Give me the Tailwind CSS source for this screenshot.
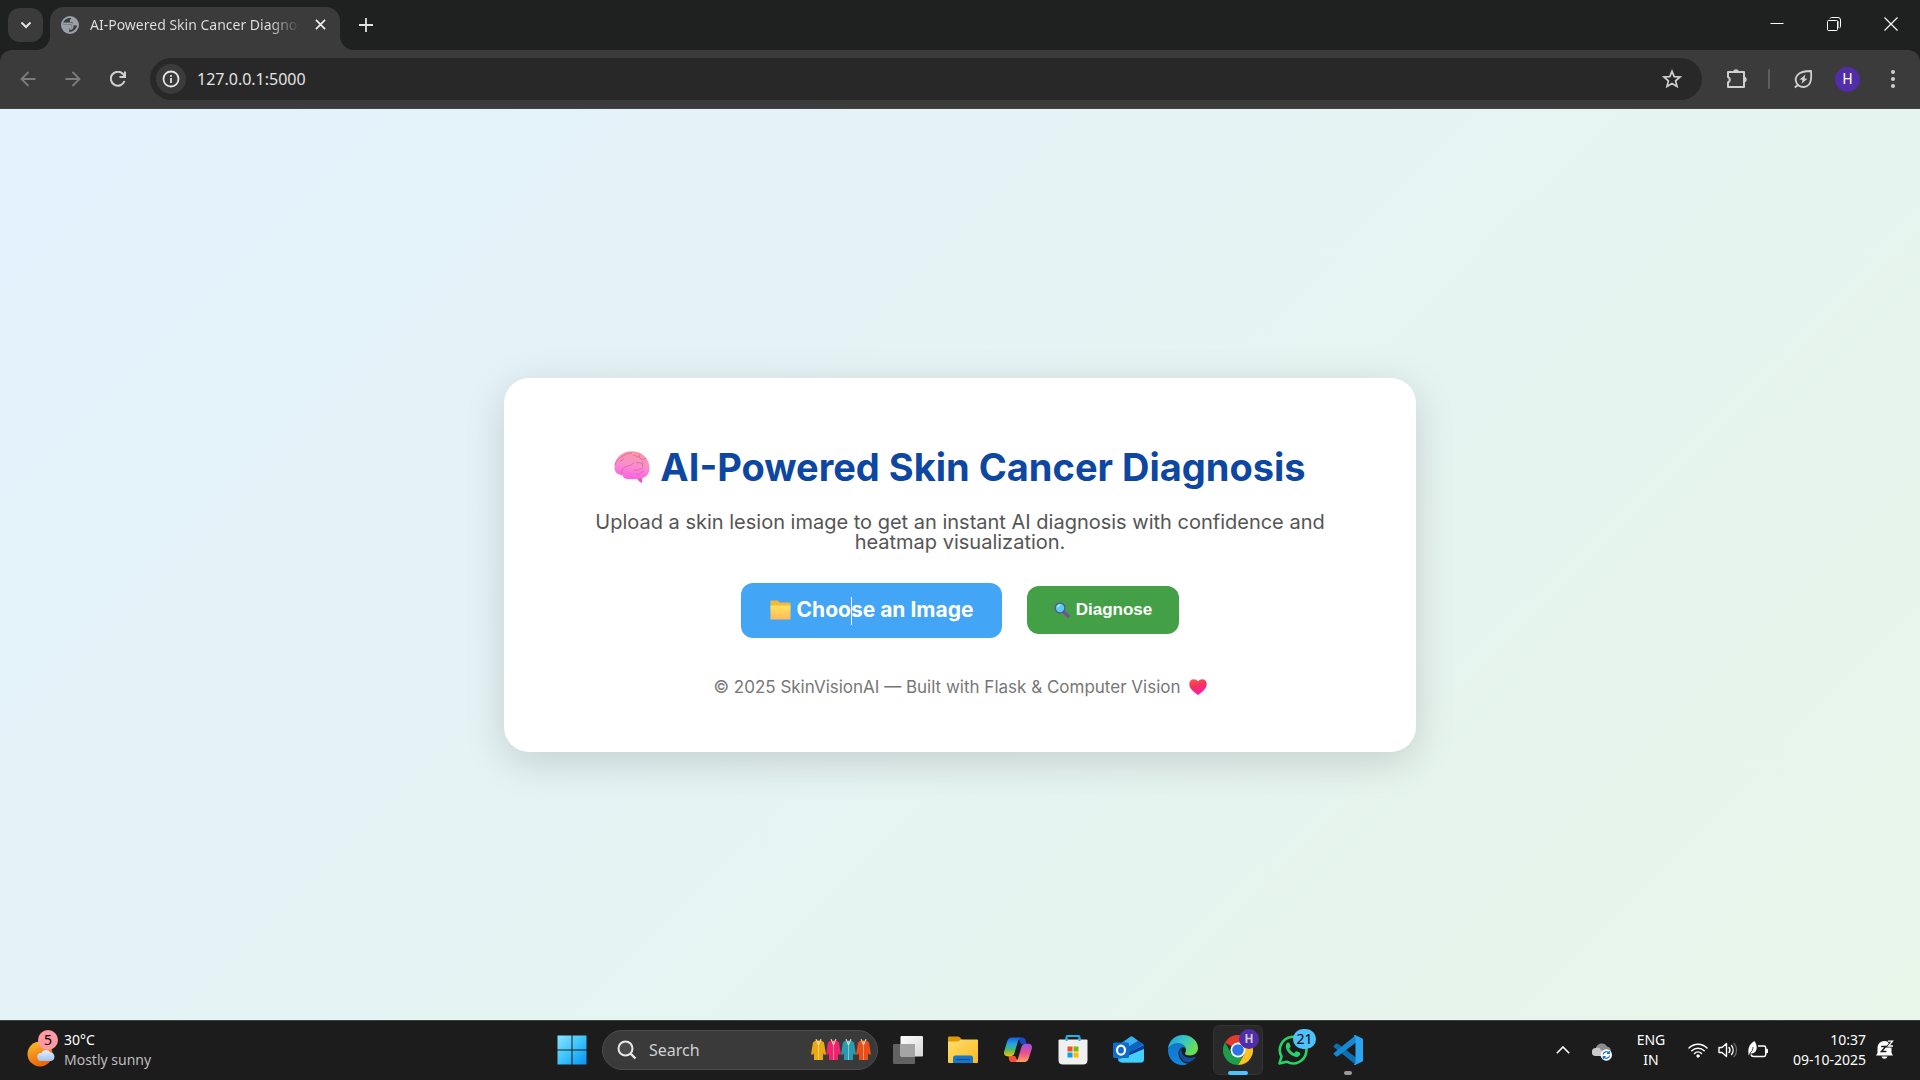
<!DOCTYPE html>
<html lang="en">
<head>
<meta charset="utf-8">
<meta name="viewport" content="width=device-width, initial-scale=1">
<title>AI-Powered Skin Cancer Diagnosis</title>
<script src="https://cdn.jsdelivr.net/npm/@tailwindcss/browser@4"></script>
</head>
<body class="flex h-screen flex-col overflow-hidden bg-[#1f2120] font-['Noto_Sans',sans-serif] text-[#e3e3e3]">

<!-- Browser window chrome -->
<header class="shrink-0">
  <div class="flex h-[50px] justify-between">
    <div class="flex items-start">
      <button aria-label="Search tabs" class="mt-2 ml-2 flex h-[34px] w-[35px] items-center justify-center rounded-xl bg-[#3b3b3b]">
        <svg class="size-4" viewBox="0 0 16 16" fill="none" stroke="#e3e3e3" stroke-width="2"><path d="M3.500 5.500 8 10l4.500-4.500"/></svg>
      </button>
      <div class="relative mt-[7px] ml-[7px] flex h-[43px] w-[290px] items-center rounded-t-[14px] bg-[#3b3b3b] pr-2.5 pl-2.5">
        <svg class="absolute bottom-0 -left-3.5 size-3.5" viewBox="0 0 14 14" fill="#3b3b3b"><path d="M14 0v14H0A14 14 0 0 0 14 0z"/></svg>
        <svg class="absolute -right-3.5 bottom-0 size-3.5" viewBox="0 0 14 14" fill="#3b3b3b"><path d="M0 0v14h14A14 14 0 0 1 0 0z"/></svg>
        <svg class="-mt-2 size-5 shrink-0" viewBox="0 0 20 20"><circle cx="10" cy="10" r="9" fill="#9aa0a8"/><path d="M9.500 3C6 3.300 3.200 6 3 9.200h6.500c1.400 0 2.300.8 2.300 2.200s-1 2.200-2.600 2.200v3.300c4-.1 7.300-2.700 7.800-6.400h-2.500c-1.300 0-2-.8-2-2V7.300H9.800V5.500c0-.8.3-1.200 1.200-1.200V3z" fill="#3b3b3b"/><path d="M3.200 8.300h6.500c2 0 3 1.200 3 3s-1.200 3-3 3" fill="none" stroke="#9aa0a8" stroke-width="1.600"/></svg>
        <span class="-mt-2 ml-2.5 w-[210px] overflow-hidden bg-linear-to-r from-[#e3e3e3] from-85% to-transparent bg-clip-text text-sm whitespace-nowrap text-transparent">AI-Powered Skin Cancer Diagnosis</span>
        <button aria-label="Close tab" class="-mt-2 ml-2.5 flex size-5 shrink-0 items-center justify-center">
          <svg class="size-[11px]" viewBox="0 0 12 12" stroke="#f0f0f0" stroke-width="1.800"><path d="M1 1l10 10M11 1 1 11"/></svg>
        </button>
      </div>
      <button aria-label="New tab" class="mt-[15px] ml-4 flex size-5 items-center justify-center">
        <svg class="size-3.5" viewBox="0 0 14 14" stroke="#e3e3e3" stroke-width="1.800"><path d="M7 0v14M0 7h14"/></svg>
      </button>
    </div>
    <div class="flex pr-px">
      <button aria-label="Minimize" class="flex h-12 w-[57px] items-center justify-center"><svg class="size-[14px]" viewBox="0 0 14 14" stroke="#fff"><path d="M.5 6.500h13"/></svg></button>
      <button aria-label="Restore" class="flex h-12 w-[57px] items-center justify-center"><svg class="size-[14px]" viewBox="0 0 14 14" fill="none" stroke="#fff"><rect x=".5" y="3.500" width="10" height="10" rx="1"/><path d="M3 1.500c.3-.6.800-1 1.500-1H11A2.500 2.500 0 0 1 13.500 3v6.500c0 .8-.4 1.300-1 1.500"/><path d="M11.500 4v7" stroke="#999"/></svg></button>
      <button aria-label="Close" class="flex h-12 w-[57px] items-center justify-center"><svg class="size-[14px]" viewBox="0 0 14 14" stroke="#fff" stroke-width="1.200"><path d="M.5.5l13 13M13.500.5l-13 13"/></svg></button>
    </div>
  </div>

  <div class="flex h-[59px] items-center rounded-t-xl border-b border-[#4a4647] bg-[#3b3b3b] px-[5px]">
    <button aria-label="Back" class="flex w-[45px] justify-center"><svg class="size-4" viewBox="0 0 16 16" fill="none" stroke="#7c7c7c" stroke-width="1.800"><path d="M15.500 8H2M8.500 1 1.500 8l7 7"/></svg></button>
    <button aria-label="Forward" class="flex w-[45px] justify-center"><svg class="size-4" viewBox="0 0 16 16" fill="none" stroke="#7c7c7c" stroke-width="1.800"><path d="M.5 8H14M7.500 1l7 7-7 7"/></svg></button>
    <button aria-label="Reload" class="flex w-[45px] justify-center"><svg class="size-4" viewBox="0 0 16 16" fill="none" stroke="#d0d0d0" stroke-width="2"><path d="M14.500 10A7 7 0 1 1 13 3l1.500 1.800"/><path d="M15 .5V6H9.500"/></svg></button>
    <div class="ml-2.5 flex h-[42px] min-w-0 flex-1 items-center rounded-full bg-[#282828] pr-5 pl-1.5">
      <button aria-label="View site information" class="flex size-[30px] shrink-0 items-center justify-center rounded-full bg-[#3b3b3b]"><svg class="size-[18px]" viewBox="0 0 18 18" fill="none" stroke="#e3e3e3" stroke-width="1.800"><circle cx="9" cy="9" r="7.500"/><path d="M9 8v5M9 5v1.800"/></svg></button>
      <input aria-label="Address" type="text" value="127.0.0.1:5000" class="ml-[11px] min-w-0 flex-1 bg-transparent text-base text-[#e3e3e3] outline-none">
      <button aria-label="Bookmark this tab"><svg class="size-5" viewBox="0 0 20 20" fill="none" stroke="#cfcfcf" stroke-width="1.700"><path d="M10 2.300l2.200 5.300 5.800.4-4.400 3.800 1.400 5.600-5-3-5 3 1.400-5.600L2 8l5.800-.4z"/></svg></button>
    </div>
    <button aria-label="Extensions" class="ml-3 flex w-[45px] justify-center"><svg class="size-[22px]" viewBox="0 0 22 22" fill="none" stroke="#cfcfcf" stroke-width="2" stroke-linejoin="round"><path d="M2 4h16v15H2v-4.500a3 3 0 0 0 0-5.500z"/><path d="M8 3.500a2.200 2.200 0 0 1 4 0zM18.500 9.500a2.200 2.200 0 0 1 0 4z" fill="#cfcfcf"/></svg></button>
    <span class="ml-[9px] h-5 w-0.5 rounded bg-[#5f5f5f]"></span>
    <button aria-label="Energy Saver" class="ml-2.5 flex w-[45px] justify-center"><svg class="size-5" viewBox="0 0 20 20" fill="none" stroke="#cfcfcf" stroke-width="1.800"><path d="M18 2c.6 6 .3 10.500-2 13.500-2.500 3-7.500 3.300-10.300 1C2.500 14 1.500 9.500 4.500 6 7.500 2.500 12.500 2 18 2zM5.500 15.500 1.800 18.500"/><path d="M12.500 5.500 6.500 10.500l3 .3-1 4 6-5-3-.3z" fill="#cfcfcf" stroke="none"/></svg></button>
    <button aria-label="Profile" class="flex w-[45px] justify-center"><span class="flex size-[25px] items-center justify-center rounded-full bg-[#512da8] font-['Roboto',sans-serif] text-sm text-white">H</span></button>
    <button aria-label="Menu" class="flex w-[45px] justify-center"><svg class="h-[18px] w-1" viewBox="0 0 4 18" fill="#cfcfcf"><circle cx="2" cy="2" r="2"/><circle cx="2" cy="9" r="2"/><circle cx="2" cy="16" r="2"/></svg></button>
  </div>
</header>

<!-- Page -->
<main class="flex min-h-0 flex-1 items-center justify-center bg-linear-[135deg,#e3f2fd,#e8f5e9] font-['Inter',sans-serif]">
  <section class="w-full max-w-[912px] rounded-[25px] bg-white px-20 pt-[65px] pb-[52px] text-center shadow-[0_10px_40px_rgba(0,0,0,0.15)]">
    <h1 class="flex items-center justify-center gap-2.5 text-[38px] leading-[48px] font-bold text-[#0d47a1]">
      <svg class="h-8 w-9 shrink-0" viewBox="0 0 36 32" role="img" aria-label="brain"><defs><linearGradient id="brain" x1=".7" y1="0" x2=".5" y2="1"><stop offset="0" stop-color="#fa9aa0"/><stop offset=".5" stop-color="#f98fcb"/><stop offset="1" stop-color="#ff62e6"/></linearGradient></defs><path d="M23 25l5 1v6c-3-1-4.500-3-5-7z" fill="#ef4cc0"/><path d="M.5 17C0 8 7 .3 18 .3 28.500.3 35.500 8 35.500 17c0 7-5 11-12 11H14c-3 0-5-1.500-5.500-4C4 24 .8 21.500.5 17z" fill="url(#brain)"/><path d="M1 14c2-6 5-7 8-9 3-2 5-3 9-3M6 10c1 0 3-1 4-3M8 23c-1-4 1-7 6-8 3-.5 5-2 6-4M19 4c2 0 4 2 6 2m1-3c-1 2-1 4 1 5s4 0 5-1M22 12c3-1 5 0 7 2m0-4c-1 2-1 4 0 6m-9 3c4 1 6-1 9-2m-7 6c3 1 5-2 8-3" fill="none" stroke="#d65c9c" stroke-width=".7"/></svg>
      <span>AI-Powered Skin Cancer Diagnosis</span>
    </h1>
    <p class="mt-[21px] text-[20px] leading-[20px] text-[#555]">Upload a skin lesion image to get an instant AI diagnosis with confidence and heatmap visualization.</p>
    <form class="mt-[31px] flex items-center justify-center gap-[25px]" onsubmit="return false">
      <label class="relative flex h-[55px] w-[261px] cursor-pointer items-center justify-center gap-1.5 rounded-xl bg-[#42a5f5] text-[21px] font-bold whitespace-nowrap text-white">
        <svg class="h-5 w-[21px] shrink-0" viewBox="0 0 21 20"><defs><linearGradient id="folder" x2="0" y2="1"><stop offset="0" stop-color="#ffe35a"/><stop offset="1" stop-color="#ffb85c"/></linearGradient></defs><path d="M.5 1.500Q.5.5 1.500.5h6l2 2h10.200q.8 0 .8 1V9H.5z" fill="#f5b73c"/><path d="M.5 5.500h20v13q0 1-1 1h-18q-1 0-1-1z" fill="url(#folder)"/></svg>
        <span>Choose an Image</span>
        <span class="absolute top-3.5 left-[110px] h-7 w-px bg-white"></span>
        <input type="file" accept="image/*" class="sr-only">
      </label>
      <button type="submit" class="flex h-12 w-[152px] items-center justify-center gap-1.5 rounded-xl bg-[#43a047] font-['Liberation_Sans',sans-serif] text-[17px] font-bold text-white">
        <svg class="size-4 shrink-0" viewBox="0 0 18 18"><path d="M10.500 10.500l5.500 5.500" stroke="#7c4b9c" stroke-width="3.500" stroke-linecap="round"/><circle cx="6.800" cy="6.800" r="5.500" fill="#5ccdf2" stroke="#54568f" stroke-width="1.500"/><path d="M4 6a3 3 0 0 1 3-2.500" stroke="#b9f0ff" stroke-width="1.200" fill="none"/></svg>
        Diagnose
      </button>
    </form>
    <p class="mt-9 flex items-center justify-center gap-2 text-[17px] leading-[26px] text-[#777]">
      <span>© 2025 SkinVisionAI — Built with Flask &amp; Computer Vision</span>
      <svg class="h-4 w-[18px]" viewBox="0 0 18 16" role="img" aria-label="love"><defs><linearGradient id="heart" x2=".3" y2="1"><stop offset="0" stop-color="#ff5a4d"/><stop offset=".5" stop-color="#f5315f"/><stop offset="1" stop-color="#ff1fa5"/></linearGradient></defs><path d="M9 16C3 12 .3 8.500.3 5 .3 2 2.300.2 4.800.2 6.500.2 8 1 9 2.500 10 1 11.500.2 13.200.2c2.500 0 4.500 1.800 4.500 4.800 0 3.500-2.700 7-8.700 11z" fill="url(#heart)"/></svg>
    </p>
  </section>
</main>

<!-- Taskbar -->
<footer class="grid h-[60px] shrink-0 grid-cols-[1fr_auto_1fr] items-center border-t border-[#3c3f3e] bg-[#1c1c1c] pb-0.5 text-sm leading-5">
  <button class="flex items-center gap-2 pl-[27px] text-left">
    <span class="relative block h-9 w-[29px]">
      <svg class="h-9 w-[29px] overflow-visible" viewBox="0 0 29 36"><defs><linearGradient id="sun" x2=".4" y2="1"><stop offset="0" stop-color="#f6c22e"/><stop offset="1" stop-color="#f0640c"/></linearGradient><linearGradient id="cloud" x2="0" y2="1"><stop offset="0" stop-color="#e8f2ff"/><stop offset="1" stop-color="#9fc2f0"/></linearGradient></defs><circle cx="13" cy="22" r="12.500" fill="url(#sun)"/><path d="M14 29a4 4 0 0 1 .5-8 5 5 0 0 1 9-.5 4.300 4.300 0 0 1 .5 8.500z" fill="url(#cloud)"/></svg>
      <span class="absolute -top-0.5 -right-0.5 flex size-5 items-center justify-center rounded-full bg-[#ff99a4] text-sm text-black">5</span>
    </span>
    <span class="block"><span class="block text-white">30°C</span><span class="block text-[#bdbdbd]">Mostly sunny</span></span>
  </button>

  <nav class="flex items-center gap-[5px]">
    <button aria-label="Start" class="flex size-[50px] items-center justify-center"><svg class="size-[30px]" viewBox="0 0 30 30"><defs><linearGradient id="win" x2="1" y2="1"><stop offset="0" stop-color="#8be3ff"/><stop offset=".5" stop-color="#3cc3fb"/><stop offset="1" stop-color="#0a90f5"/></linearGradient></defs><path d="M.5.5h14v14H.5zM15.500.5h14v14h-14zM.5 15.500h14v14H.5zM15.500 15.500h14v14h-14z" fill="url(#win)"/></svg></button>
    <div class="flex h-10 w-[276px] items-center rounded-full border border-[#4c4c4c] bg-[#3a3a3a] pr-1.5 pl-3.5">
      <svg class="size-5 shrink-0" viewBox="0 0 20 20" fill="none" stroke="#e8e8e8" stroke-width="2"><circle cx="8.500" cy="8.500" r="7" fill="#4a4a4a"/><path d="M13.500 13.500l5 5" stroke-width="2.400"/></svg>
      <input aria-label="Search" type="text" placeholder="Search" class="ml-3 w-0 min-w-0 flex-1 bg-transparent text-base text-[#d0d0d0] outline-none placeholder:text-[#d0d0d0]">
      <svg class="h-[22px] w-[60px] shrink-0" viewBox="0 0 60 22"><defs><g id="kurta"><path d="M4.500 1.500h6l2.500 2 2 12h-2.500l-.5-2v7.500H3v-7.500l-.5 2H0l2-12z"/><path d="M7.500 2v19" stroke="#fff8" stroke-width=".8"/><path d="M5 0l2.500 6L10 0" fill="none" stroke="#ffe0b0" stroke-width="1"/></g></defs><use href="#kurta" fill="#e8a915"/><use href="#kurta" x="15" fill="#f0246e"/><use href="#kurta" x="30" fill="#2a9ab0"/><use href="#kurta" x="45" fill="#e85018"/></svg>
    </div>
    <button aria-label="Task view" class="flex size-[50px] items-center justify-center"><svg class="h-7 w-[30px]" viewBox="0 0 30 28"><defs><linearGradient id="tv" x2="1" y2="1"><stop offset="0" stop-color="#fff"/><stop offset="1" stop-color="#d6d6d6"/></linearGradient></defs><rect y="8" width="22" height="20" rx="1" fill="#626262"/><rect x="7.500" width="22.500" height="20.500" rx="1" fill="url(#tv)"/><path d="M7.500 8H22v12.500H8.500q-1 0-1-1z" fill="#a5a5a5"/></svg></button>
    <button aria-label="File Explorer" class="flex size-[50px] items-center justify-center"><svg class="h-7 w-[30px]" viewBox="0 0 30 28"><defs><linearGradient id="fe" x2="1" y2="1"><stop offset="0" stop-color="#ffdf70"/><stop offset="1" stop-color="#fbb81a"/></linearGradient></defs><path d="M0 1.500Q0 .5 1 .5h9q1 0 1.700.7L14 4v5H0z" fill="#dd9a08"/><path d="M0 5.500h10L13 3.500h16q1 0 1 1V26q0 1-1 1H1q-1 0-1-1z" fill="url(#fe)"/><path d="M5 27v-5q0-2.500 2.500-2.500h15Q25 19.500 25 22v5z" fill="#1277cf"/><path d="M8.500 23.500h13" stroke="#0a4b8c" stroke-width="1.200"/></svg></button>
    <button aria-label="Copilot" class="flex size-[50px] items-center justify-center"><svg class="h-[26px] w-7" viewBox="0 0 28 26"><defs><linearGradient id="c1" x2="0" y2="1"><stop offset="0" stop-color="#1a5fd8"/><stop offset=".35" stop-color="#21a5e8"/><stop offset=".65" stop-color="#54b66a"/><stop offset="1" stop-color="#f2c500"/></linearGradient><linearGradient id="c2" x2="0" y2="1"><stop offset="0" stop-color="#9a52e8"/><stop offset=".5" stop-color="#ea4f8f"/><stop offset="1" stop-color="#ffa25a"/></linearGradient></defs><path d="M14 .5h4.500c1.500 0 2.500 1 3 2.500L22.500 7H17z" fill="#1948c8"/><path d="M7 25c-2-.5-2-3-2.500-6H11l3.500 6z" fill="#f5503c"/><path d="M7.500.5H17c-2 1-2.700 2.500-3.300 4.500L10.500 16c-.7 2.200-2 3.300-4.500 3.300H3.500C.5 19.300-.5 17 .3 14L3 5C4 1.500 5.500.5 7.500.5z" fill="url(#c1)"/><path d="M20.500 25H11c2-1 2.700-2.500 3.300-4.500L17.500 10c.7-2.200 2-3.300 4.500-3.300h2.500c3 0 4 2.300 3.200 5.300L25 20.500c-1 3.500-2.500 4.500-4.500 4.500z" fill="url(#c2)"/></svg></button>
    <button aria-label="Microsoft Store" class="flex size-[50px] items-center justify-center"><svg class="size-[30px]" viewBox="0 0 30 30"><path d="M8.500 6V2q0-1 1-1h11q1 0 1 1v4" fill="none" stroke="#25b0e8" stroke-width="2"/><path d="M.5 5.500q0-1 1-1h27q1 0 1 1V25q0 4.500-4.500 4.500H5Q.5 29.500.5 25z" fill="#f0f0f0"/><path d="M8.500 6V3M21.500 6V3" stroke="#25b0e8" stroke-width="2"/><path d="M9.500 11.500h5v5h-5z" fill="#f25022"/><path d="M15.500 11.500h5v5h-5z" fill="#7fba00"/><path d="M9.500 17.500h5v5h-5z" fill="#00a4ef"/><path d="M15.500 17.500h5v5h-5z" fill="#ffb900"/></svg></button>
    <button aria-label="Outlook" class="flex size-[50px] items-center justify-center"><svg class="h-[27px] w-[31px]" viewBox="0 0 31 27"><path d="M5 9 17.500.8q1-.6 2 0L31 9v14q0 3.500-3.500 3.500h-19Q5 26.500 5 23z" fill="#1b8fe3"/><path d="M12 5l5.500-4.200q1-.6 2 0L25 5 12 14z" fill="#38b1ef"/><path d="M30.500 8 17 17l-4-5L25 5z" fill="#0f62c0"/><path d="M31 9v5L17 21l-3-3z" fill="#0a3f91"/><path d="M31 13v10q0 3.500-3.500 3.500h-19L5 24z" fill="#42d0fb"/><rect y="6.500" width="16" height="15.500" rx="1.500" fill="#0f6cc9"/><ellipse cx="8" cy="14.200" rx="4" ry="4.500" fill="none" stroke="#fff" stroke-width="2.200"/></svg></button>
    <button aria-label="Edge" class="flex size-[50px] items-center justify-center"><svg class="size-[30px]" viewBox="0 0 30 30"><defs><linearGradient id="e1" x2="1" y2=".5"><stop offset="0" stop-color="#1b9de2"/><stop offset=".5" stop-color="#36c4c8"/><stop offset="1" stop-color="#6be04e"/></linearGradient><linearGradient id="e2" x2="0" y2="1"><stop offset="0" stop-color="#1176cc"/><stop offset="1" stop-color="#1186e0"/></linearGradient></defs><path d="M0 14C.5 6 7 0 15 0c8.500 0 15 6 15 13 0 4.500-3.500 7.500-8 7.500-3 0-5-1-5-2.300 0-.8 1-1.200 1-3.200 0-3-3-6-7.500-6C6 9 2 10.500 0 14z" fill="url(#e1)"/><path d="M0 14c2-4 5.500-6 9.500-6 4.500 0 8 2.500 8.500 6-1-1.500-2.500-2-4-1.500-3 1-4.500 5-3 9s5 7.500 9 7c-1.500 1-3.500 1.500-5.500 1.500C6 30-.5 23 0 14z" fill="url(#e2)"/><path d="M14 12.500c-2.500 1.500-3.500 5-2 9 1.700 4.200 6 7 10 5.500 2.500-1 4.500-3 5.500-4.500.4-.6 0-1-.8-.6C21 24 14 22 13.500 15.500c0-1.200 0-2 .5-3z" fill="#134f9c"/></svg></button>
    <button aria-label="Chrome" class="relative flex size-[50px] items-center justify-center rounded-md border border-[#333] bg-[#292929]">
      <svg class="size-[30px]" viewBox="0 0 30 30"><path d="M15 15 2 7.500A15 15 0 0 1 28 7.500H15z" fill="#e33b2e"/><path d="M15 15l6.500 3.800L15 30a15 15 0 0 0 13-22.500H15z" fill="#fcc31e"/><path d="M2 7.500A15 15 0 0 0 15 30l6.500-11.200H8.500z" fill="#1e9e4a"/><circle cx="15" cy="15" r="7.500" fill="#fff"/><circle cx="15" cy="15" r="5.800" fill="#2f73e8"/></svg>
      <span class="absolute top-[3px] right-[3px] flex size-5 items-center justify-center rounded-full bg-[#512da8] font-['Roboto',sans-serif] text-xs font-bold text-[#ccc]">H</span>
      <span class="absolute -bottom-px left-3.5 h-1 w-5 rounded-full bg-[#4cc2ff]"></span>
    </button>
    <button aria-label="WhatsApp" class="relative flex size-[50px] items-center justify-center"><svg class="size-[30px]" viewBox="0 0 30 30"><path d="M1.500 28.500l2-7A13.300 13.300 0 1 1 8.700 26.700z" fill="none" stroke="#25d366" stroke-width="2.600" stroke-linejoin="round"/><path d="M10 7.500c.8 0 1.200.2 1.500 1l1 2.400c.2.500 0 1-.3 1.300l-1 1.300c1 2.200 2.800 3.800 5 4.700l1.500-1.700c.3-.4.700-.4 1.200-.2l2.600 1.200c.6.300.9.500.8 1.200-.3 2-2 3.300-4 3.200C13 21.500 8 16 7.800 11.500c0-1.800 1.200-4 2.200-4z" fill="#25d366"/></svg>
      <span class="absolute top-1 right-0.5 flex h-5 w-[23px] items-center justify-center rounded-full bg-[#4cc2ff] text-sm text-black">21</span></button>
    <button aria-label="Visual Studio Code" class="relative flex size-[50px] items-center justify-center"><svg class="size-[30px]" viewBox="0 0 30 30"><path d="M1 10.500 3 8.700q.8-.6 1.700 0L23 22.500V30L.8 12q-.6-.8.200-1.500z" fill="#0f6fb5"/><path d="M1 19.500 3 21.300q.8.600 1.700 0L23 7.500V0L.8 18q-.6.800.2 1.500z" fill="#1589d1"/><path d="M22 0l7 3.200q1 .5 1 1.500v20.600q0 1-1 1.500L22 30q-1 .2-1-1 1.500 0 1.500-1.500v-25Q22.500 1 21 1q0-1.200 1-1z" fill="#2aa5f2"/></svg>
      <span class="absolute bottom-0 left-[21px] h-1 w-2 rounded-full bg-[#9a9a9a]"></span></button>
  </nav>

  <div class="flex items-center justify-end pr-[26px] text-white">
    <button aria-label="Show hidden icons" class="mr-[22px]"><svg class="block h-2 w-3.5" viewBox="0 0 14 8" fill="none" stroke="#fff" stroke-width="1.600"><path d="M.8 7.200 7 1l6.200 6.200"/></svg></button>
    <button aria-label="OneDrive" class="mr-6"><svg class="mt-1 block h-[18px] w-5" viewBox="0 0 20 18"><path d="M4 13a4 4 0 0 1 0-8A6 6 0 0 1 15 3.500 5 5 0 0 1 16 13z" fill="#8d8d8d"/><path d="M4 13a4 4 0 0 1-.3-8C6 4 8 5 9 7l6 6z" fill="#c9c9c9"/><circle cx="14.300" cy="12" r="5.700" fill="#fff"/><path d="M11 11.500a3.400 3.400 0 0 1 6-1.500m.6 2.500a3.400 3.400 0 0 1-6 1.500M17.300 8v2.300H15M11.300 16v-2.300h2.300" fill="none" stroke="#1a75d1" stroke-width="1.200"/></svg></button>
    <button class="mr-[22px] w-[30px] text-center text-sm leading-5"><span class="block">ENG</span><span class="block">IN</span></button>
    <button aria-label="Network, volume and battery" class="mr-5 flex items-center gap-2.5">
      <svg class="h-4 w-5" viewBox="0 0 20 16" fill="none" stroke="#fff" stroke-width="1.500" stroke-linecap="round"><path d="M1 6a12.500 12.500 0 0 1 18 0M3.800 8.800a8.700 8.700 0 0 1 12.400 0M6.500 11.500a5 5 0 0 1 7 0"/><circle cx="10" cy="14" r="1.200" fill="#fff" stroke-width="1"/></svg>
      <svg class="h-4 w-5" viewBox="0 0 20 16" fill="none" stroke="#fff" stroke-width="1.400" stroke-linecap="round"><path d="M1 5.500v5h3l4.500 4V1.500L4 5.500z" stroke-linejoin="round"/><path d="M11 5.500a4 4 0 0 1 0 5M13.500 3.500a7 7 0 0 1 0 9"/><path d="M16 1.500a9.500 9.500 0 0 1 0 13" stroke="#666"/></svg>
      <svg class="h-[18px] w-5" viewBox="0 0 20 18"><path d="M10 5h6q1.700 0 1.700 1.700v7.100q0 1.700-1.700 1.700H5.500Q3.500 15.500 3 13.500" fill="none" stroke="#fff" stroke-width="1.500"/><path d="M18 7.800v4.400h1q1 0 1-1V8.800q0-1-1-1z" fill="#fff"/><path d="M6.500 0c2.300 3.500 3 7.500 1.200 10.300-1.400 2-3.600 2.700-5.500 2L.5 14.500v-2.500C-.3 7 1.500 2.800 6.500 0z" fill="#fff"/><path d="M1.500 12.500C4 11 5 8.500 5 6" fill="none" stroke="#1c1c1c" stroke-width=".8"/></svg>
    </button>
    <button class="mr-2.5 w-[78px] text-right text-sm leading-5"><span class="block">10:37</span><span class="block">09-10-2025</span></button>
    <button aria-label="Notifications"><svg class="block h-[19px] w-[18px]" viewBox="0 0 18 19"><path d="M1.500 13V7.500A6.800 6.800 0 0 1 8.500 1C12.500 1 15.500 4 15.500 7.500V13l1.500 2.500H0zM5.500 16.500h6q-.6 2.200-3 2.200t-3-2.200z" fill="#fff"/><path d="M5.200 6.500h4.600L5.400 11.500h5" stroke="#1c1c1c" stroke-width="1.500" fill="none"/><path d="M12 1.200h4.500L12.500 6H17" stroke="#1c1c1c" stroke-width="3" fill="none"/><path d="M12 1.200h4.500L12.500 6H17" stroke="#fff" stroke-width="1.300" fill="none"/></svg></button>
  </div>
</footer>
</body>
</html>
